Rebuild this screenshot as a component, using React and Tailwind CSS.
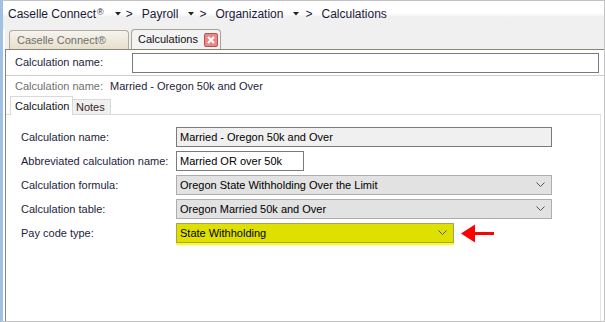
import React from "react";

const font = { fontFamily: "'Liberation Sans', Arial, sans-serif" };

const Chevron = () => (
  <svg width="9" height="6" viewBox="0 0 9 6" className="shrink-0">
    <path d="M0.5 0.5 L4.5 4.5 L8.5 0.5" fill="none" stroke="#555" strokeWidth="1" />
  </svg>
);

// little dropdown triangle in the breadcrumb
const Caret = ({ className }) => (
  <svg width="6" height="4" viewBox="0 0 6 4" className={className}>
    <path d="M0 0 L6 0 L3 3.5 Z" fill="#222" />
  </svg>
);

const Row = ({ label, children }) => (
  <div className="flex items-center h-[24px]">
    <div className="w-[155px] shrink-0 whitespace-nowrap text-[#1d1d3a]">{label}</div>
    {children}
  </div>
);

export default function App() {
  return (
    <div
      className="w-[605px] h-[322px] flex flex-col bg-white border-t border-r border-b border-[#c3c3c3] border-l-[3px] border-l-[#9fc2e4] text-[11px] text-black overflow-hidden"
      style={font}
    >
      {/* breadcrumb */}
      <div className="h-[28px] shrink-0 flex items-center pb-[3px] pl-[5px] text-[12px] text-[#1a1a38] whitespace-nowrap bg-[linear-gradient(to_bottom,#ffffff_0,#ffffff_12px,#f0f0f0_16px,#f0f0f0_100%)]">
        <span>
          Caselle Connect<span className="text-[9px] relative -top-[3px] ml-[1px]">®</span>
        </span>
        <Caret className="ml-[11px]" />
        <span className="ml-[5px]">&gt;</span>
        <span className="ml-[9px]">Payroll</span>
        <Caret className="ml-[10px]" />
        <span className="ml-[5px]">&gt;</span>
        <span className="ml-[9px]">Organization</span>
        <Caret className="ml-[10px]" />
        <span className="ml-[6px]">&gt;</span>
        <span className="ml-[9px]">Calculations</span>
      </div>

      {/* doc tabs */}
      <div className="h-[21px] shrink-0 flex items-end pl-[4px] gap-[2px] bg-[#f0f0f0] border-b border-[#8c8476] ml-[2px]">
        <div className="h-[19px] w-[120px] flex items-center pl-[7px] rounded-t-[4px] border border-b-0 border-[#b2aa9c] bg-[linear-gradient(to_bottom,#f7f4ee,#e6dfcc)] text-[#6e6e6e] whitespace-nowrap">
          Caselle Connect®
        </div>
        <div className="h-[20px] w-[90px] flex items-center pl-[6px] rounded-t-[4px] border border-b-0 border-[#a8a298] bg-[#f3f3f3] text-[#111] whitespace-nowrap">
          <span>Calculations</span>
          <span className="ml-auto mr-[2px] w-[14px] h-[14px] rounded-[2px] border border-[#b55252] bg-[#e98a8a] flex items-center justify-center">
            <svg width="8" height="8" viewBox="0 0 8 8">
              <path d="M1 1 L7 7 M7 1 L1 7" stroke="#fff" strokeWidth="2" />
            </svg>
          </span>
        </div>
      </div>

      {/* main panel */}
      <div className="flex-1 flex flex-col ml-[2px] border-l border-[#8c8476] bg-white">
        <div className="h-[26px] flex items-center pl-[9px] pr-[5px] border-b border-[#cdcdcd]">
          <div className="w-[117px] shrink-0 text-[#1d1d3a]">Calculation name:</div>
          <div className="flex-1 h-[20px] border border-[#7a7a7a] bg-white" />
        </div>
        <div className="h-[21px] flex items-center pl-[9px] whitespace-nowrap">
          <span className="w-[95px] text-[#707070]">Calculation name:</span>
          <span className="text-[#1d1d3a]">Married - Oregon 50k and Over</span>
        </div>

        {/* inner tabs */}
        <div className="h-[18px] flex items-end pl-[4px] border-b border-[#d9d9d9] mr-[3px]">
          <div className="h-[19px] -mb-px w-[63px] flex items-center pl-[4px] bg-white border border-b-0 border-[#d9d9d9] text-[#111]">
            Calculation
          </div>
          <div className="h-[15px] w-[38px] flex items-center pl-[3px] bg-[#f0f0f0] border border-l-0 border-b-0 border-[#d9d9d9] text-[#3a1f1f]">
            Notes
          </div>
        </div>

        <div className="flex-1 flex flex-col pl-[15px] pt-[10px] mr-[3px] border-r border-[#e3e3e3]">
          <Row label="Calculation name:">
            <div className="w-[376px] h-[20px] flex items-center px-[3px] border border-[#7a7a7a] bg-[#f0f0f0]">
              Married - Oregon 50k and Over
            </div>
          </Row>
          <Row label="Abbreviated calculation name:">
            <div className="w-[128px] h-[20px] flex items-center px-[3px] border border-[#7a7a7a] bg-white">
              Married OR over 50k
            </div>
          </Row>
          <Row label="Calculation formula:">
            <div className="w-[376px] h-[20px] flex items-center pl-[3px] pr-[6px] border border-[#adadad] bg-[#e2e2e2]">
              <span className="flex-1">Oregon State Withholding Over the Limit</span>
              <Chevron />
            </div>
          </Row>
          <Row label="Calculation table:">
            <div className="w-[376px] h-[20px] flex items-center pl-[3px] pr-[6px] border border-[#adadad] bg-[#e2e2e2]">
              <span className="flex-1">Oregon Married 50k and Over</span>
              <Chevron />
            </div>
          </Row>
          <Row label="Pay code type:">
            <div className="w-[278px] h-[22px] flex flex-col mt-[2px]">
              <div className="h-[20px] flex items-center pl-[3px] pr-[6px] border border-[#a3a35c] bg-[#e0e000]">
                <span className="flex-1">State Withholding</span>
                <Chevron />
              </div>
              <div className="h-[2px] bg-[#ffff00]" />
            </div>
            <svg width="34" height="19" viewBox="0 0 34 19" className="ml-[7px]">
              <path d="M0 9.5 L14 0.5 L14 8 L33 8 L33 11 L14 11 L14 18.5 Z" fill="#ff0000" />
            </svg>
          </Row>
        </div>
      </div>
    </div>
  );
}
